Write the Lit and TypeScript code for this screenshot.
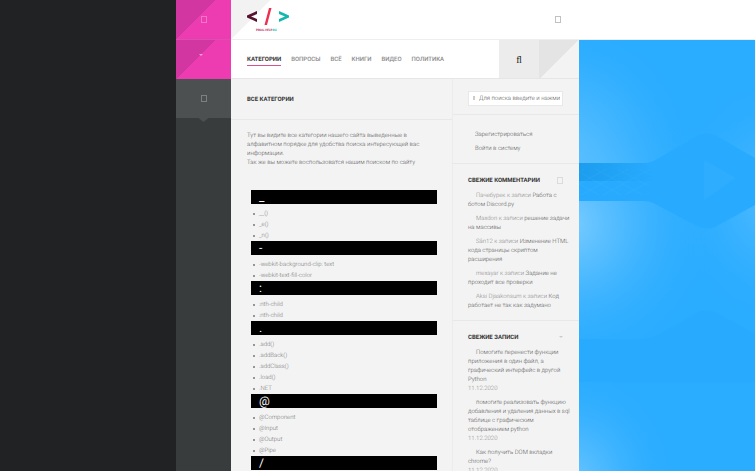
import { LitElement, html, css, svg } from "lit";
import { customElement } from "lit/decorators.js";

const NAV = ["КАТЕГОРИИ", "ВОПРОСЫ", "ВСЁ", "КНИГИ", "ВИДЕО", "ПОЛИТИКА"];

const GROUPS = [
  { letter: "_", items: ["__()", "_e()", "_n()"] },
  { letter: "-", items: ["-webkit-background-clip: text", "-webkit-text-fill-color"] },
  { letter: ":", items: [":nth-child", ":nth-child"] },
  { letter: ".", items: [".add()", ".addBack()", ".addClass()", ".load()", ".NET"] },
  { letter: "@", items: ["@Component", "@Input", "@Output", "@Pipe"] },
  { letter: "/", items: [] as string[] },
];

const COMMENTS = [
  ["Пачебурек", "Работа с ботом Discord.py"],
  ["Maxdon", "решение задачи на массивы"],
  ["Sân12", "Изменение HTML кода страницы скриптом расширения"],
  ["mexayar", "Задание не проходит все проверки"],
  ["Aksi Djaakonsum", "Код работает не так как задумано"],
];

const POSTS = [
  "Помогите перенести функции приложения в один файл, а графический интерфейс в другой Python",
  "помогите реализовать функцию добавления и удаления данных в sql таблице с графическим отображением python",
  "Как получить DOM вкладки chrome?",
];

const boxIcon = html`<svg class="box-icon" viewBox="0 0 6 8" aria-hidden="true">
  <rect x="0.5" y="0.5" width="5" height="6" fill="none" stroke="currentColor" />
</svg>`;

@customElement("site-backdrop")
export class SiteBackdrop extends LitElement {
  static styles = css`
    :host { display: block; position: relative; overflow: hidden; background: #28abff; }
    .art { position: absolute; inset: 0; width: 100%; height: 100%; }
  `;
  render() {
    return html`<svg class="art" viewBox="0 0 176 431" preserveAspectRatio="xMinYMin slice" aria-hidden="true">
      ${svg`
      <defs>
        <radialGradient id="glow"><stop offset="0" stop-color="#7accff"/><stop offset="0.35" stop-color="#58beff" stop-opacity="0.8"/><stop offset="0.7" stop-color="#3cb3ff" stop-opacity="0.4"/><stop offset="1" stop-color="#30afff" stop-opacity="0"/></radialGradient>
        <linearGradient id="band"><stop offset="0" stop-color="#1c9dee"/><stop offset="1" stop-color="#28abff"/></linearGradient>
        <pattern id="mesh" width="22" height="12" patternUnits="userSpaceOnUse"><path d="M0 0 L22 12 M22 0 L0 12" stroke="#4ab6f8" stroke-width="0.5" opacity="0.3"/></pattern>
      </defs>
      <rect width="176" height="431" fill="#2aacff"/>
      <ellipse cx="-12" cy="112" rx="130" ry="135" fill="url(#glow)" opacity="0.85"/>
      <rect y="142" width="176" height="289" fill="#2aacff"/>
      <ellipse cx="-10" cy="184" rx="150" ry="150" fill="url(#glow)"/>
      <ellipse cx="196" cy="160" rx="110" ry="130" fill="url(#glow)" opacity="0.5"/>
      <ellipse cx="-8" cy="440" rx="110" ry="120" fill="url(#glow)" opacity="0.8"/>
      <path d="M0 123 H68 Q74 122 80 118 L120 95 Q128 92 136 95 L176 118 V165 L136 187 Q128 190 120 187 L76 164 Q72 161 64 161 H0 Z" fill="#28abff"/>
      <path d="M0 123 H68 L76 141 H0 Z" fill="url(#band)"/>
      <rect y="129" width="70" height="26" fill="url(#mesh)"/>
      <path d="M125 120 L157 138 L125 160 Z" fill="#2eadfe"/>
      <path d="M0 299 H68 Q76 297 84 292 L120 272 Q128 269 136 272 L176 294 V342 H0 Z" fill="#28abff" opacity="0.9"/>
      `}
    </svg>`;
  }
}

@customElement("app-root")
export class AppRoot extends LitElement {
  static styles = css`
    :host { display: block; font: 300 6px/9px Roboto, "Open Sans", sans-serif; color: #555; text-rendering: geometricPrecision; }
    * { box-sizing: border-box; }
    h1, h2, p, ul { margin: 0; padding: 0; }
    ul { list-style: none; }
    a { color: inherit; text-decoration: none; }
    button { border: 0; padding: 0; background: none; color: inherit; font: inherit; }
    .page {
      display: grid;
      grid-template-columns: minmax(0, 1fr) 55px 348px minmax(0, 1fr);
      grid-template-rows: 40px minmax(0, 1fr);
      height: 100vh;
      overflow: hidden;
      background: #202224;
    }
    .rail { grid-column: 2; grid-row: 1 / 3; display: flex; flex-direction: column; background: #393c3c; }
    .cell { display: flex; align-items: center; justify-content: center; height: 40px; flex: none; }
    .pink { color: #f59ad6; background: linear-gradient(135deg, #d237a1 0 28px, #ed3cb1 28px); border-bottom: 1px solid #dd4fae; }
    .short { height: 39px; border: 0; }
    .grey { background: #4c5050; color: #9da1a2; }
    .notch { align-self: center; width: 10px; height: 4px; background: #4c5050; clip-path: polygon(0 0, 100% 0, 50% 100%); }
    .box-icon { display: block; width: 6px; height: 8px; opacity: 0.6; }
    .arrow { display: block; width: 4px; height: 3px; }
    .raise { padding: 0 6px 10px 0; }
    .top {
      grid-column: 3 / 5; display: flex; align-items: center;
      background: linear-gradient(135deg, #f2f2f2 28px, transparent 28px), #fff;
      border-bottom: 1px solid #eee;
    }
    .logo { padding-left: 16px; }
    .logo svg { display: block; width: 43px; height: 28px; }
    .mark { font: 700 3px Roboto, sans-serif; }
    .top-action { width: 42px; display: flex; justify-content: center; color: #999; }
    .top-inner { width: 348px; display: flex; align-items: center; justify-content: space-between; }
    .shell { grid-column: 3; min-width: 0; background: #f3f3f3; }
    .bar { display: flex; height: 39px; background: #f3f3f3; border-bottom: 1px solid #e6e6e6; }
    .nav { flex: 1; display: flex; align-items: center; gap: 10px; padding: 0 0 0 16px; background: #fff; font-weight: 500; color: #888; }
    .nav a { padding: 2px 0 1px; border-bottom: 1px solid transparent; }
    .nav .current { color: #333; font-weight: 700; border-color: #d9518c; }
    .find { width: 40px; background: #ececec; color: #222; font: 10px "Liberation Serif", serif; }
    .fold { width: 40px; background: linear-gradient(135deg, #e4e4e4 28px, #f3f3f3 28px); }
    .columns { display: grid; grid-template-columns: minmax(0, 1fr) 126px; }
    .main { border-right: 1px solid #ececec; }
    .title { height: 41px; display: flex; align-items: center; padding-left: 16px; border-bottom: 1px solid #e8e8e8; }
    h1, h2 { font-size: 6px; line-height: 9px; font-weight: 700; color: #333; }
    .intro { padding: 11px 28px 23px 16px; }
    .group { margin: 0 15px 0 20px; }
    .letter { height: 14px; line-height: 14px; padding-left: 8px; background: #000; color: #fff; font-size: 12px; font-weight: 400; }
    .terms { padding: 4px 0 0 8px; line-height: 11px; color: #777; }
    .terms li { position: relative; }
    .terms li::before { content: ""; position: absolute; left: -6px; top: 5px; width: 2px; height: 2px; border-radius: 50%; background: #777; }
    .block { padding: 12px 16px 0 15px; border-bottom: 1px solid #e8e8e8; }
    .field { width: 100%; height: 15px; padding: 0 2px 0 10px; border: 1px solid #e8e8e8; background: #fff; font: inherit; text-rendering: inherit; color: #555; display: block; }
    .field::placeholder { color: #555; opacity: 1; }
    .search { position: relative; height: 36px; }
    .hint { position: absolute; left: 20px; top: 17px; width: 2px; height: 4px; border: 1px solid #ccc; }
    .account { height: 49px; padding-top: 15px; display: flex; flex-direction: column; gap: 5px; }
    .account a { padding-left: 7px; color: #555; }
    .head { display: flex; justify-content: space-between; align-items: center; color: #ccc; }
    .entries { display: flex; flex-direction: column; gap: 5px; margin-right: -9px; padding: 6px 0 10px; }
    .entries li { text-indent: 8px; color: #888; }
    .entries a { color: #555; }
    .entries time { display: block; text-indent: 0; color: #888; }
    .backdrop { grid-column: 4; }
  `;

  render() {
    return html`<div class="page">
      <aside class="rail">
        <button class="cell pink" aria-label="Меню">${boxIcon}</button>
        <button class="cell pink short raise" aria-label="Развернуть">
          <svg class="arrow" viewBox="0 0 4 3"><path d="M0 1 H4 L2 3 Z" fill="currentColor" /></svg>
        </button>
        <button class="cell grey short" aria-label="Закладки">${boxIcon}</button>
        <span class="notch"></span>
      </aside>
      <header class="top">
        <div class="top-inner">
          <a class="logo" href="#" aria-label="prog-help.ru">
            <svg viewBox="0 0 43 28">
              <path d="M10 5 V8 L4 10.500 L10 13 V16 L0 11.500 V9.500 Z" fill="#56122f" />
              <path d="M22 2 H24.500 L20 19 H17.500 Z" fill="#ee3050" />
              <path d="M32 5 V8 L38 10.500 L32 13 V16 L42 11.500 V9.500 Z" fill="#12b8ac" />
              <text class="mark" x="9" y="25" fill="#c02350">PROG-HELP<tspan fill="#12b8ac">.RU</tspan></text>
            </svg>
          </a>
          <button class="top-action" aria-label="Профиль">${boxIcon}</button>
        </div>
      </header>
      <div class="shell">
        <div class="bar">
          <nav class="nav">${NAV.map((n, i) => html`<a href="#" class=${i === 0 ? "current" : ""}>${n}</a>`)}</nav>
          <button class="find" aria-label="Поиск">ﬂ</button>
          <div class="fold"></div>
        </div>
        <div class="columns">
          <main class="main">
            <div class="title"><h1>ВСЕ КАТЕГОРИИ</h1></div>
            <p class="intro">
              Тут вы видите все категории нашего сайта выведенные в алфавитном порядке для удобства поиска интересующей вас информации.<br />
              Так же вы можете воспользоватся нашим поиском по сайту
            </p>
            ${GROUPS.map((g) => html`<section class="group">
              <h2 class="letter">${g.letter}</h2>
              <ul class="terms">${g.items.map((t) => html`<li><a href="#">${t}</a></li>`)}</ul>
            </section>`)}
          </main>
          <aside>
            <form class="block search">
              <input class="field" type="text" aria-label="Поиск" placeholder="Для поиска введите и нажмите Enter" />
              <span class="hint"></span>
            </form>
            <div class="block account"><a href="#">Зарегистрироваться</a><a href="#">Войти в систему</a></div>
            <section class="block">
              <div class="head"><h2>СВЕЖИЕ КОММЕНТАРИИ</h2>${boxIcon}</div>
              <ul class="entries">${COMMENTS.map(([who, what]) => html`<li>${who} к записи <a href="#">${what}</a></li>`)}</ul>
            </section>
            <section class="block">
              <div class="head"><h2>СВЕЖИЕ ЗАПИСИ</h2><svg class="arrow" viewBox="0 0 4 3"><path d="M0 0 H4 L2 2 Z" fill="currentColor" /></svg></div>
              <ul class="entries">${POSTS.map((p) => html`<li><a href="#">${p}</a><time>11.12.2020</time></li>`)}</ul>
            </section>
          </aside>
        </div>
      </div>
      <site-backdrop class="backdrop"></site-backdrop>
    </div>`;
  }
}
